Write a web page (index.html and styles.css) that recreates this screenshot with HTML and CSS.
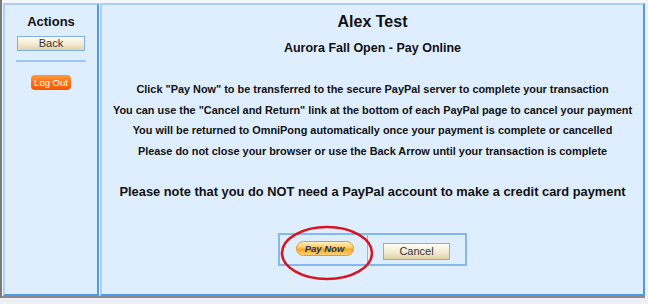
FILE: index.html
```html
<!DOCTYPE html>
<html>
<head>
<meta charset="utf-8">
<link rel="stylesheet" href="styles.css">
</head>
<body>
<div class="frame">
  <div class="panels">
    <div class="panel side">
      <div class="side-title">Actions</div>
      <button class="btn-beige back">Back</button>
      <div class="sep"></div>
      <button class="logout">Log Out</button>
    </div>
    <div class="panel main">
      <div class="title">Alex Test</div>
      <div class="subtitle">Aurora Fall Open - Pay Online</div>
      <div class="info">
        <div>Click "Pay Now" to be transferred to the secure PayPal server to complete your transaction</div>
        <div>You can use the "Cancel and Return" link at the bottom of each PayPal page to cancel your payment</div>
        <div>You will be returned to OmniPong automatically once your payment is complete or cancelled</div>
        <div>Please do not close your browser or use the Back Arrow until your transaction is complete</div>
      </div>
      <div class="note">Please note that you do NOT need a PayPal account to make a credit card payment</div>
      <div class="btnbox">
        <div class="cell left"><button class="paynow">Pay Now</button></div>
        <div class="cell right"><button class="btn-beige cancel">Cancel</button></div>
        <svg class="circle" width="100" height="60" viewBox="0 0 100 60"><ellipse cx="49" cy="29" rx="45" ry="26" fill="none" stroke="#d81420" stroke-width="2.6"/></svg>
      </div>
    </div>
  </div>
</div>
</body>
</html>
```
FILE: styles.css
```css
html, body { margin: 0; padding: 0; }
body {
  width: 648px; height: 304px; overflow: hidden;
  background: #eef0f5;
  font-family: "Liberation Sans", Arial, sans-serif;
}
.frame {
  width: 645px;
  padding-top: 3px;
  padding-left: 1px;
  border-left: 2px solid #7a7a7a;
  border-bottom: 2px solid #8a8a8a;
  background: #f4f6f9;
  box-sizing: border-box;
}
.panels { display: flex; gap: 1px; }
.panel {
  height: 293px;
  box-sizing: border-box;
  background: #dfeeff;
  border: 2px solid;
  border-color: #a9cffa #4f98ea #4f98ea #a9cffa;
}
.side { width: 96px; display: flex; flex-direction: column; align-items: center; }
.side-title { font-weight: bold; font-size: 13px; color: #111; margin-top: 9px; line-height: 16px; }
button { font-family: "Liberation Sans", Arial, sans-serif; padding: 0; cursor: pointer; }
.btn-beige {
  background: linear-gradient(#fffdf4, #f3ead2 55%, #e2d2a6);
  border: 1px solid #7eb0ea;
  color: #333;
  font-size: 11px;
}
.back { width: 68px; height: 15px; margin-top: 6px; line-height: 13px; }
.sep { width: 70px; height: 2px; background: #9cc6f6; margin-top: 9px; }
.logout {
  margin-top: 13px;
  width: 40px; height: 15px;
  border: none; border-radius: 4px;
  background: linear-gradient(#ff9a3a, #ff6a10 60%, #f25a00);
  color: #fff; font-size: 9.5px; line-height: 15px;
  white-space: nowrap;
}
.main { width: 545px; text-align: center; color: #111; white-space: nowrap; }
.title { font-weight: bold; font-size: 16px; line-height: 20px; margin-top: 7px; }
.subtitle { font-weight: bold; font-size: 12.5px; line-height: 18px; margin-top: 7px; }
.info { font-weight: bold; font-size: 10.9px; line-height: 20.5px; margin-top: 22px; }
.note { font-weight: bold; font-size: 12.85px; line-height: 20px; margin-top: 21px; }
.btnbox {
  position: relative;
  margin: 31px auto 0;
  width: 189px; height: 33px;
  box-sizing: border-box;
  border: 2px solid #86b8f0;
  display: flex;
}
.cell { display: flex; align-items: center; justify-content: center; }
.cell.left { width: 88px; border-right: 1px solid #86b8f0; padding-left: 2px; padding-bottom: 2px; box-sizing: border-box; }
.cell.right { flex: 1; padding-top: 4px; }
.paynow {
  width: 58px; height: 15px;
  border: 1px solid #e69a1e; border-radius: 8px;
  background: linear-gradient(#fff0c0, #ffc860 45%, #f7a520 55%, #ffd27a);
  color: #1b3670; font-style: italic; font-weight: bold; font-size: 9.5px; line-height: 13px;
}
.cancel { width: 67px; height: 17px; line-height: 15px; }
.circle { position: absolute; left: -2px; top: -11px; pointer-events: none; }
```
